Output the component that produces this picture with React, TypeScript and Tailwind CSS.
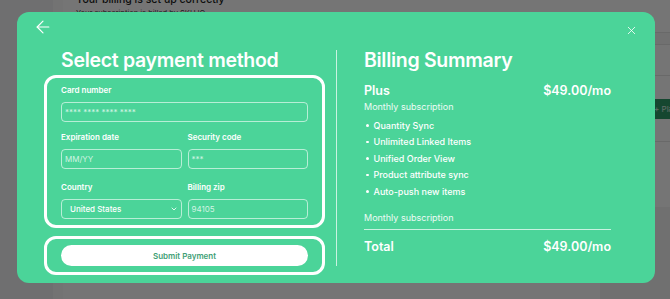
import React from 'react';
import { ArrowLeft, X, ChevronDown } from 'lucide-react';

const features = ['Quantity Sync', 'Unlimited Linked Items', 'Unified Order View', 'Product attribute sync', 'Auto-push new items'];

const fieldLabel = 'block text-[8px] leading-[12px] font-semibold text-white';
const fieldBox =
  'mt-[6px] h-[20px] w-full rounded-[4px] border border-white/60 bg-transparent px-[3px] text-[8px] text-white/75 flex items-center';

export default function App() {
  return (
    <div className="relative h-[299px] w-[670px] overflow-hidden bg-white" style={{ fontFamily: 'Inter, "Noto Sans", sans-serif' }}>
      {/* page behind the modal */}
      <div className="flex h-full">
        <div className="w-[63px] bg-[#f1f2f3] border-r-[10px] border-[#fbfbfb]" />
        <div className="flex-1 pl-[13px]">
          <div className="-mt-[7px] text-[10.5px] leading-[14px] font-medium text-[#222]">Your billing is set up correctly</div>
          <div className="mt-[2px] text-[7.5px] leading-[10px] text-[#444]">Your subscription is billed by SKU IQ</div>
        </div>
      </div>
      <div className="absolute left-[600px] top-[32px] w-[70px] border-y border-[#e4e4e4] h-[13px] bg-[#f7f7f7]" />
      <div className="absolute left-[600px] top-[75px] w-[70px] border-t border-[#e4e4e4]" />
      <div className="absolute left-[650px] top-[99px] flex h-[20px] w-[20px] items-center overflow-hidden whitespace-nowrap rounded-l-[3px] bg-[#2f9b69] pl-[4px] text-[8px] text-white/80">+ Pla</div>
      <div className="absolute left-[600px] top-[141px] w-[70px] border-t border-[#e4e4e4]" />
      <div className="absolute left-[600px] top-[207px] h-[92px] w-[70px] bg-[#f3f3f3]" />

      {/* overlay + modal */}
      <div className="absolute inset-0 bg-black/[0.54] pl-[17px] pt-[12px]">
        <div className="relative flex h-[271px] w-[638px] rounded-[12px] bg-[#4bd499] pl-[27px] pr-[44px] pt-[34px] text-white">
          <button className="absolute left-[16px] top-[5px] p-0 text-white">
            <ArrowLeft size={20} strokeWidth={1.4} />
          </button>
          <button className="absolute right-[17px] top-[12px] p-0 text-white">
            <X size={13} strokeWidth={1.5} />
          </button>

          {/* left: payment form */}
          <div className="w-[281px] shrink-0">
            <h2 className="ml-[17px] h-[29px] text-[19.5px] leading-[28px] font-semibold tracking-[-0.015em]">Select payment method</h2>
            <div className="rounded-[12px] border-[3px] border-white px-[14px] pt-[6px] pb-[6px]">
              <label className={fieldLabel}>Card number</label>
              <div className={fieldBox}>**** **** **** ****</div>
              <div className="mt-[9px] grid grid-cols-2 gap-[6px]">
                <div>
                  <label className={fieldLabel}>Expiration date</label>
                  <div className={fieldBox}>MM/YY</div>
                </div>
                <div>
                  <label className={fieldLabel}>Security code</label>
                  <div className={fieldBox}>***</div>
                </div>
              </div>
              <div className="mt-[12px] grid grid-cols-2 gap-[6px]">
                <div>
                  <label className={fieldLabel}>Country</label>
                  <div className="mt-[6px] flex h-[20px] w-full items-center justify-between rounded-[4px] border border-white/60 pl-[8px] pr-[3px] text-[8px] font-medium text-white">
                    <span>United States</span>
                    <ChevronDown size={8} strokeWidth={2.5} />
                  </div>
                </div>
                <div>
                  <label className={fieldLabel}>Billing zip</label>
                  <div className={fieldBox}>94105</div>
                </div>
              </div>
            </div>
            <div className="mt-[8px] rounded-[12px] border-[3px] border-white px-[14px] py-[6px]">
              <button className="flex h-[21px] w-full items-center justify-center rounded-full bg-white text-[8px] font-semibold text-[#3f9f76]">
                Submit Payment
              </button>
            </div>
          </div>

          {/* divider */}
          <div className="ml-[11px] mt-[4px] h-[216px] w-px bg-white/70" />

          {/* right: billing summary */}
          <div className="flex-1 pl-[27px]">
            <h2 className="h-[29px] text-[19.5px] leading-[28px] font-semibold tracking-[-0.015em]">Billing Summary</h2>
            <div className="mt-[7px] flex items-center justify-between text-[12.5px] leading-[18px] font-semibold">
              <span>Plus</span>
              <span>$49.00/mo</span>
            </div>
            <div className="text-[9px] leading-[14px] text-white/90">Monthly subscription</div>
            <ul className="mt-[3px]">
              {features.map((f) => (
                <li key={f} className="flex items-center h-[16.6px] text-[9px] font-medium">
                  <span className="ml-[2px] mr-[5px] h-[2.5px] w-[2.5px] rounded-full bg-white" />
                  {f}
                </li>
              ))}
            </ul>
            <div className="mt-[11px] text-[9px] leading-[14px] text-white/90">Monthly subscription</div>
            <div className="mt-[4px] border-t border-white/70" />
            <div className="mt-[8px] flex items-center justify-between text-[12.5px] leading-[18px] font-semibold">
              <span>Total</span>
              <span>$49.00/mo</span>
            </div>
          </div>
        </div>
      </div>
    </div>
  );
}
